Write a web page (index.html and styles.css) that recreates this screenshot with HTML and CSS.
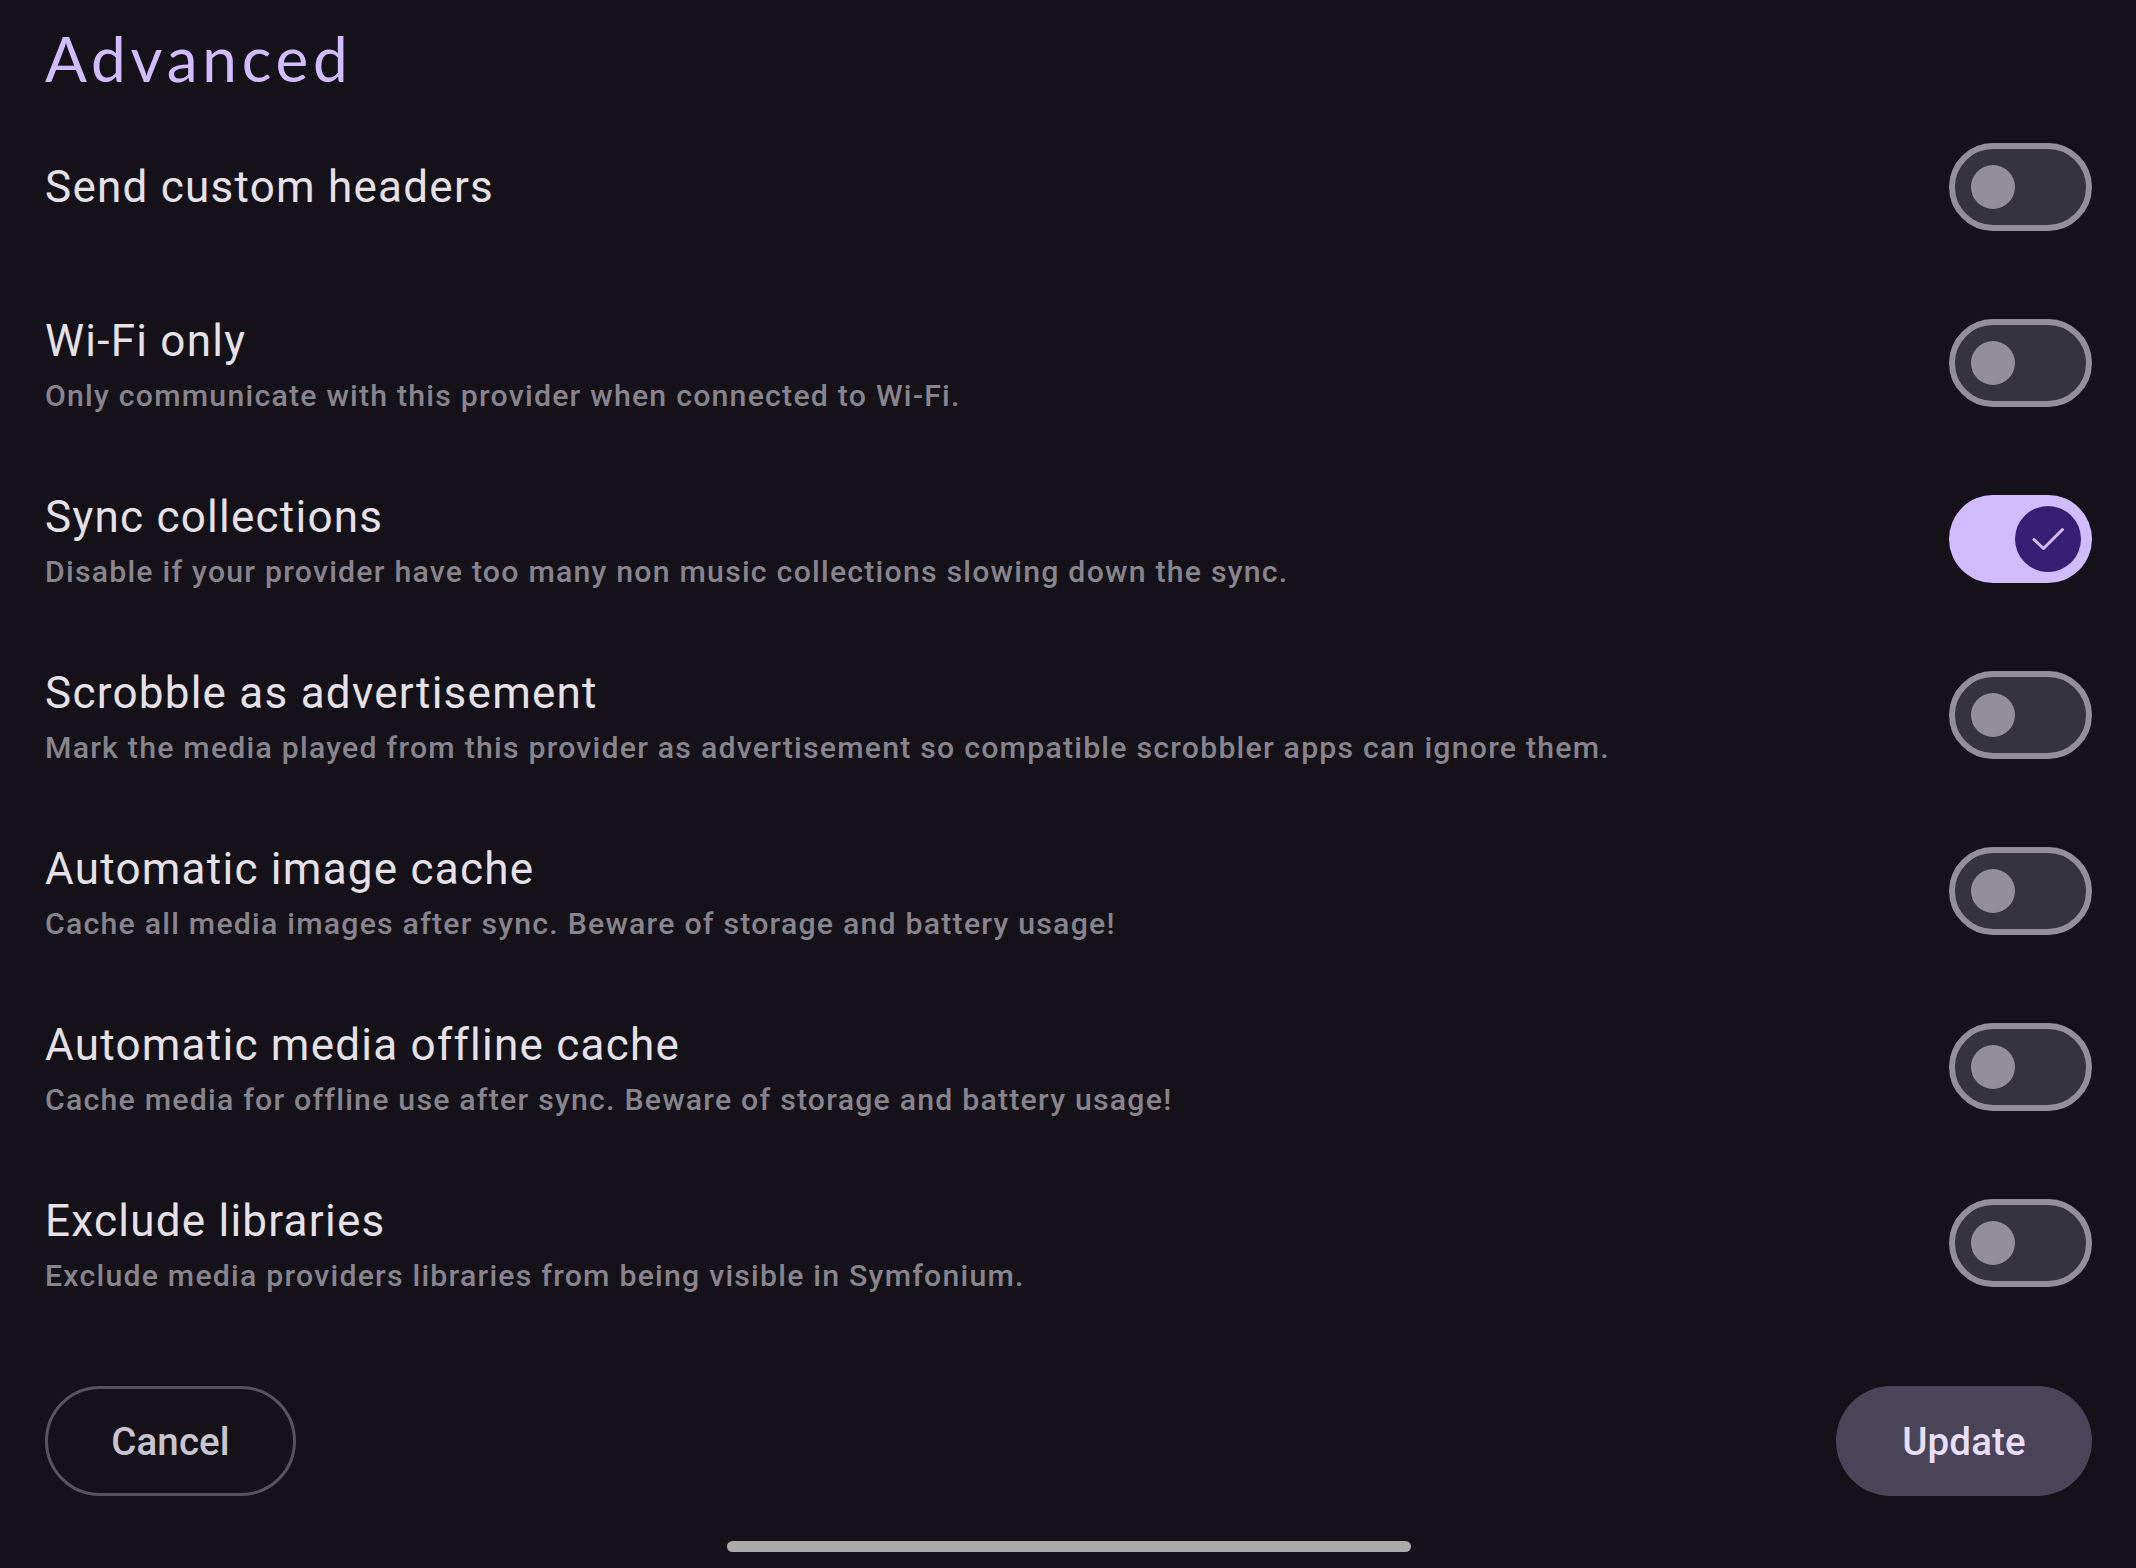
FILE: index.html
```html
<!DOCTYPE html>
<html lang="en">
<head>
<meta charset="utf-8">
<title>Advanced</title>
<link rel="stylesheet" href="styles.css">
</head>
<body>
<div class="screen">
  <h1 class="heading">Advanced</h1>
  <div class="list">
    <div class="row">
      <div class="text"><div class="title">Send custom headers</div></div>
      <div class="switch"><span class="thumb"></span></div>
    </div>
    <div class="row">
      <div class="text"><div class="title">Wi-Fi only</div><div class="sub">Only communicate with this provider when connected to Wi-Fi.</div></div>
      <div class="switch"><span class="thumb"></span></div>
    </div>
    <div class="row">
      <div class="text"><div class="title">Sync collections</div><div class="sub">Disable if your provider have too many non music collections slowing down the sync.</div></div>
      <div class="switch on"><span class="thumb"><svg class="check" viewBox="0 0 66 66" width="66" height="66"><polyline points="19,33.5 28.5,42.5 47.5,23.5" fill="none" stroke="#d0bcff" stroke-width="3" stroke-linecap="round" stroke-linejoin="round"/></svg></span></div>
    </div>
    <div class="row">
      <div class="text"><div class="title">Scrobble as advertisement</div><div class="sub">Mark the media played from this provider as advertisement so compatible scrobbler apps can ignore them.</div></div>
      <div class="switch"><span class="thumb"></span></div>
    </div>
    <div class="row">
      <div class="text"><div class="title">Automatic image cache</div><div class="sub">Cache all media images after sync. Beware of storage and battery usage!</div></div>
      <div class="switch"><span class="thumb"></span></div>
    </div>
    <div class="row">
      <div class="text"><div class="title">Automatic media offline cache</div><div class="sub">Cache media for offline use after sync. Beware of storage and battery usage!</div></div>
      <div class="switch"><span class="thumb"></span></div>
    </div>
    <div class="row">
      <div class="text"><div class="title">Exclude libraries</div><div class="sub">Exclude media providers libraries from being visible in Symfonium.</div></div>
      <div class="switch"><span class="thumb"></span></div>
    </div>
  </div>
  <div class="actions">
    <button class="btn btn-outline">Cancel</button>
    <button class="btn btn-tonal">Update</button>
  </div>
  <div class="handle"></div>
</div>
</body>
</html>
```

FILE: styles.css
```css
html, body {
  margin: 0;
  padding: 0;
  background: #141218;
}
body {
  width: 2136px;
  height: 1568px;
  overflow: hidden;
  font-family: Roboto, "Liberation Sans", sans-serif;
  color: #e6e0e9;
}
.screen {
  padding: 0 44px 0 45px;
}
.heading {
  margin: 27px 0 0 0;
  height: 62px;
  font-family: Lato, "Open Sans", sans-serif;
  font-weight: 400;
  font-size: 62px;
  line-height: 62px;
  letter-spacing: 4.8px;
  color: #d0bcff;
}
.list {
  margin-top: 10px;
}
.row {
  height: 176px;
  display: flex;
  align-items: center;
  justify-content: space-between;
}
.text {
  display: flex;
  flex-direction: column;
}
.title {
  font-size: 44px;
  line-height: 66px;
  letter-spacing: 1.25px;
  color: #e6e0e9;
  white-space: nowrap;
}
.sub {
  font-size: 30.25px;
  line-height: 44px;
  font-weight: 500;
  letter-spacing: 1.22px;
  color: #88848e;
  white-space: nowrap;
}
.switch {
  flex: none;
  box-sizing: border-box;
  width: 143px;
  height: 88px;
  border-radius: 44px;
  border: 6px solid #938f99;
  background: #36343b;
  display: flex;
  align-items: center;
  padding-left: 16px;
}
.thumb {
  display: block;
  width: 44px;
  height: 44px;
  border-radius: 50%;
  background: #938f99;
}
.switch.on {
  border: none;
  background: #d0bcff;
  padding-left: 0;
  justify-content: flex-end;
  padding-right: 11px;
}
.switch.on .thumb {
  width: 66px;
  height: 66px;
  background: #381e72;
}
.check {
  display: block;
}
.actions {
  margin-top: 55px;
  display: flex;
  justify-content: space-between;
}
.btn {
  box-sizing: border-box;
  height: 110px;
  border-radius: 55px;
  font-family: Roboto, "Liberation Sans", sans-serif;
  font-weight: 500;
  font-size: 38.5px;
  letter-spacing: 0.1px;
  padding: 0;
  display: flex;
  align-items: center;
  justify-content: center;
}
.btn-outline {
  width: 251px;
  background: transparent;
  border: 3px solid #56535b;
  color: #cac4d0;
}
.btn-tonal {
  width: 256px;
  background: #4a4458;
  border: none;
  color: #e8def8;
}
.handle {
  margin: 45px auto 0;
  width: 684px;
  height: 11px;
  border-radius: 6px;
  background: #ababab;
}
```
